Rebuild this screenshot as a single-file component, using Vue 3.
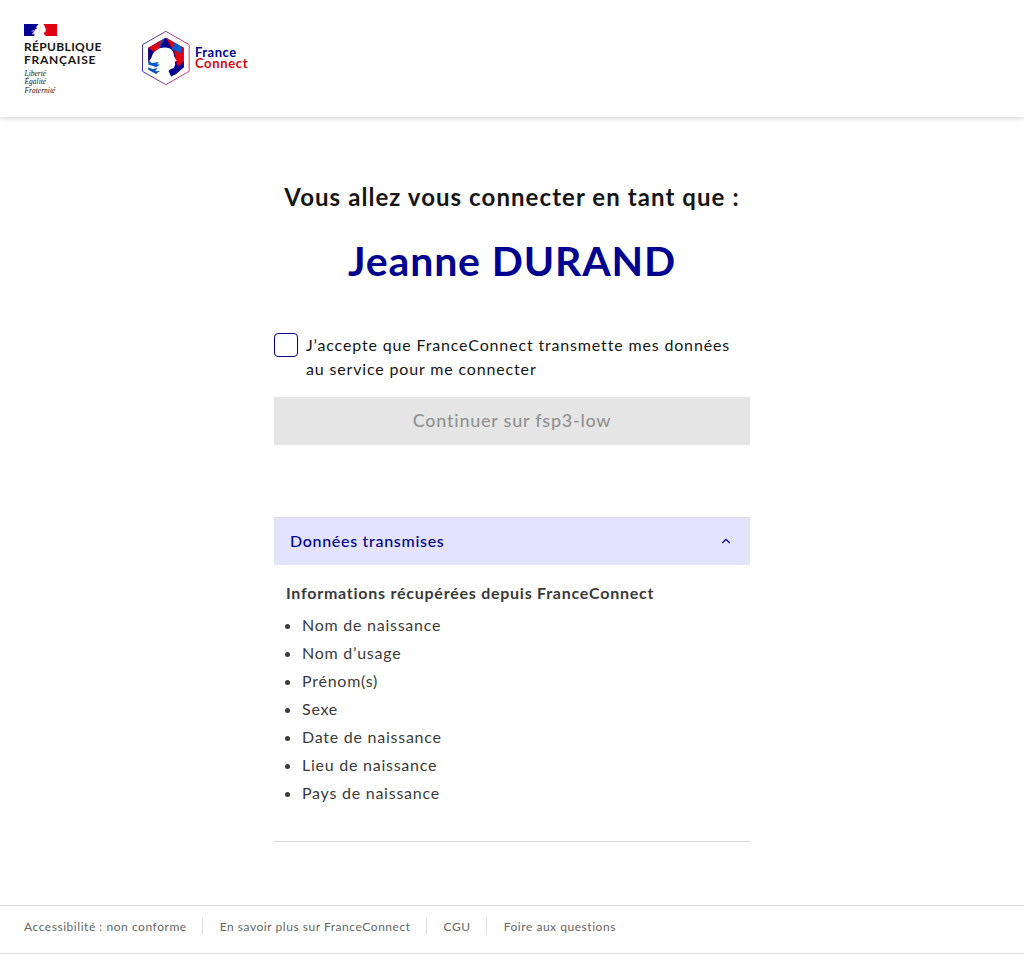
<script setup>
import { ref } from 'vue'

const accepted = ref(false)
const open = ref(true)
const claims = [
  'Nom de naissance',
  'Nom d’usage',
  'Prénom(s)',
  'Sexe',
  'Date de naissance',
  'Lieu de naissance',
  'Pays de naissance',
]
const links = [
  'Accessibilité : non conforme',
  'En savoir plus sur FranceConnect',
  'CGU',
  'Foire aux questions',
]
</script>

<template>
  <div class="page">
    <header class="header">
      <div class="state">
        <svg class="flag" viewBox="0 0 33 12" width="33" height="12" aria-hidden="true">
          <rect width="17" height="12" fill="#000091" />
          <rect x="16" width="17" height="12" fill="#e1000f" />
          <path d="M14.6 0H19.2C20.4 1 20.7 2.2 20.9 3.2L22.2 5.4L21.5 6L21.6 7.600C21.3 8.600 20.300 8.200 19.800 8.800L20 10L22 12H9.800L11.400 10.400L8.600 10.200L10.400 8.800L8.500 8.300L11.400 6.600L10.800 5.800L13.200 4.200L12 3.200Z" fill="#fff" />
          <path d="M15.600 1.600L17 3.200L15.400 5.200L16 7.400L14 9" fill="none" stroke="#c4c4d4" stroke-width=".6" />
          <path d="M7.600 7.200L10.600 6.400M8 9.800L10 9" stroke="#fff" stroke-width=".7" />
        </svg>
        <p class="state-name">RÉPUBLIQUE<br /><span class="wide">FRANÇAISE</span></p>
        <p class="motto">Liberté<br />Égalité<br />Fraternité</p>
      </div>
      <div class="brand">
        <svg viewBox="0 0 150 168" width="50" height="56" aria-hidden="true">
          <defs>
            <linearGradient id="edge" x1="0" x2="1" y1="0" y2="0">
              <stop offset="0" stop-color="#3a3aab" />
              <stop offset="1" stop-color="#e0405a" />
            </linearGradient>
          </defs>
          <path d="M74.500 4L144.500 44V124L74.500 164L4.500 124V44Z" fill="none" stroke="url(#edge)" stroke-width="3" />
          <path d="M74.500 23L128 53V112L104 132L74 142L22 100V53Z" fill="#000091" />
          <path d="M22 53L48 38L40 70L22 99Z" fill="#e1000f" />
          <path d="M22 53L39 66L30 99H22Z" fill="#000091" />
          <path d="M48 38L72 24L58 55L38 68Z" fill="#0a4fb5" />
          <path d="M48 38L60 31L56 53L36 70Z" fill="#e1000f" />
          <path d="M74.500 23L92 55L70 50L56 53Z" fill="#000091" />
          <path d="M75 23L101 38L94 58Z" fill="#e1000f" />
          <path d="M101 38L124 51L120 72L92 57Z" fill="#0a5bd0" />
          <path d="M124 51L128 53V94L118 72Z" fill="#e1000f" />
          <path d="M99 60L121 71L128 94V112L108 106Z" fill="#e1000f" />
          <path d="M128 94V112L104 133L88 141L94 118L112 110Z" fill="#000091" />
          <path d="M48 60C58 51 82 50 92 59C99 65 97 72 100 80L107 92L101 96L103 103L99 113C94 118 84 115 83 124L91 142L75 154L18 124V103L31 84C34 73 38 66 48 60Z" fill="#fff" />
          <path d="M22 91L33 99L54 96L48 103L57 104L45 112L34 107L22 104Z" fill="#0a5bd0" />
          <path d="M22 112L36 118L51 113L42 124L57 122L45 132L22 119Z" fill="#0a4fb5" />
        </svg>
        <div class="brand-name"><span class="france">France</span><span class="connect">Connect</span></div>
      </div>
    </header>

    <main class="main">
      <h1 class="title">Vous allez vous connecter en tant que :</h1>
      <p class="person">Jeanne DURAND</p>

      <label class="consent">
        <input v-model="accepted" class="check" type="checkbox" />
        <span>J’accepte que FranceConnect transmette mes données<br />au service pour me connecter</span>
      </label>
      <button class="submit" :disabled="!accepted">Continuer sur fsp3-low</button>

      <section class="accordion">
        <button class="toggle" :aria-expanded="open" @click="open = !open">
          <span class="toggle-text">Données transmises</span>
          <svg viewBox="0 0 16 16" width="16" height="16" aria-hidden="true">
            <path d="M8 6.200L4.700 9.500L3.800 8.600L8 4.400L12.200 8.600L11.300 9.500Z" fill="#000091" />
          </svg>
        </button>
        <div v-show="open" class="panel">
          <h2 class="panel-title">Informations récupérées depuis FranceConnect</h2>
          <ul class="claims">
            <li v-for="claim in claims" :key="claim">{{ claim }}</li>
          </ul>
        </div>
      </section>
    </main>

    <footer class="footer">
      <a v-for="link in links" :key="link" class="link">{{ link }}</a>
    </footer>
  </div>
</template>

<style>
body {
  margin: 0;
  background: #fff;
}
</style>

<style scoped>
.page {
  box-sizing: border-box;
  width: 100%;
  height: 954px;
  display: flex;
  flex-direction: column;
  overflow: hidden;
  color: #161616;
  font-family: Lato, "Open Sans", sans-serif;
  font-size: 16px;
  line-height: 24px;
}
p, h1, h2, ul {
  margin: 0;
}
.header {
  box-sizing: border-box;
  flex: none;
  height: 117px;
  padding: 24px 24px 0;
  display: flex;
  background: #fff;
  box-shadow: 0 1px 5px rgba(0, 0, 18, 0.2);
}
.state {
  width: 117px;
}
.flag {
  display: block;
}
.state-name {
  margin-top: 4px;
  font-size: 12px;
  font-weight: 700;
  line-height: 13px;
  letter-spacing: 0.35px;
  white-space: nowrap;
}
.wide {
  letter-spacing: 0.75px;
}
.motto {
  margin-top: 4px;
  padding-left: 0.5px;
  font-family: "Liberation Serif", serif;
  font-style: italic;
  font-size: 7.5px;
  line-height: 8.4px;
}
.brand {
  display: flex;
  height: 56px;
  margin-top: 6px;
}
.brand-name {
  margin: 17px 0 0 4px;
  display: flex;
  flex-direction: column;
  font-size: 13px;
  font-weight: 700;
  line-height: 11px;
}
.france {
  color: #000091;
  letter-spacing: 0.5px;
}
.connect {
  color: #e1000f;
  letter-spacing: 0.65px;
}
.main {
  flex: none;
  width: 476px;
  height: 788px;
  margin: 0 auto;
  text-align: center;
}
.title {
  margin-top: 64px;
  font-size: 24px;
  font-weight: 700;
  line-height: 32px;
  letter-spacing: 1.07px;
  white-space: nowrap;
}
.person {
  margin-top: 24px;
  color: #000091;
  font-size: 41px;
  font-weight: 700;
  line-height: 48px;
  letter-spacing: 0.85px;
}
.consent {
  margin-top: 48px;
  display: flex;
  gap: 8px;
  text-align: left;
  letter-spacing: 0.84px;
  white-space: nowrap;
}
.check {
  appearance: none;
  box-sizing: border-box;
  width: 24px;
  height: 24px;
  margin: 0;
  border: 1px solid #000091;
  border-radius: 4px;
}
.check:checked {
  background: #000091;
}
.submit {
  display: block;
  width: 100%;
  height: 48px;
  margin-top: 16px;
  padding: 0 0 2px;
  border: 0;
  background: #000091;
  color: #f5f5fe;
  font: 500 18px/28px Lato, "Open Sans", sans-serif;
  letter-spacing: 0.75px;
}
.submit:disabled {
  background: #e5e5e5;
  color: #929292;
}
.accordion {
  margin-top: 72px;
  border-top: 1px solid #ddd;
  border-bottom: 1px solid #ddd;
  text-align: left;
}
.toggle {
  width: 100%;
  height: 47px;
  padding: 0 16px;
  display: flex;
  align-items: center;
  justify-content: space-between;
  border: 0;
  background: #e3e3fd;
  color: #000091;
  font: 500 16px/24px Lato, "Open Sans", sans-serif;
  letter-spacing: 0.7px;
}
.toggle-text {
  padding-bottom: 2px;
}
.panel {
  padding: 16px 12px 34px;
  color: #3a3a3a;
}
.panel-title {
  font-size: 16px;
  font-weight: 700;
  line-height: 24px;
  letter-spacing: 0.75px;
  white-space: nowrap;
}
.claims {
  margin-top: 6px;
  padding: 0 0 0 16px;
  letter-spacing: 0.75px;
}
.claims li {
  line-height: 28px;
}
.footer {
  flex: none;
  box-sizing: border-box;
  height: 49px;
  padding: 12px 24px;
  display: flex;
  border-top: 1px solid #ddd;
  border-bottom: 1px solid #ddd;
  color: #666;
  font-size: 12px;
  line-height: 18px;
  letter-spacing: 0.54px;
}
.link {
  height: 16px;
  white-space: nowrap;
}
.link + .link {
  margin-left: 15px;
  padding-left: 17px;
  border-left: 1px solid #ddd;
}
</style>
